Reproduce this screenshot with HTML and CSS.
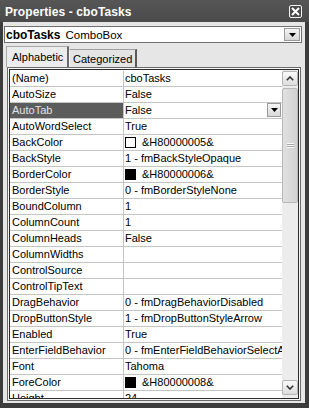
FILE: index.html
```html
<!DOCTYPE html>
<html>
<head>
<meta charset="utf-8">
<link rel="stylesheet" href="styles.css">
</head>
<body>
<div class="window">
  <div class="titlebar">
    <span class="title">Properties - cboTasks</span>
    <span class="close"><svg width="9" height="9" viewBox="0 0 9 9"><path d="M1 1 L8 8 M8 1 L1 8" stroke="#fff" stroke-width="2" fill="none"/></svg></span>
  </div>
  <div class="body">
    <div class="combo">
      <span class="combo-text"><b>cboTasks</b><span class="combo-type">ComboBox</span></span>
      <span class="dd-btn"><svg width="7" height="4" viewBox="0 0 7 4"><path d="M0 0 H7 L3.5 4 Z" fill="#000"/></svg></span>
    </div>
    <div class="tabs">
      <div class="tab active">Alphabetic</div>
      <div class="tab">Categorized</div>
    </div>
    <div class="grid">
      <div class="list">
        <div class="rows">
          <div class="row"><div class="name">(Name)</div><div class="val">cboTasks</div></div>
          <div class="row"><div class="name">AutoSize</div><div class="val">False</div></div>
          <div class="row sel"><div class="name">AutoTab</div><div class="val">False<span class="cell-btn"><svg width="7" height="4" viewBox="0 0 7 4"><path d="M0 0 H7 L3.5 4 Z" fill="#000"/></svg></span></div></div>
          <div class="row"><div class="name">AutoWordSelect</div><div class="val">True</div></div>
          <div class="row"><div class="name">BackColor</div><div class="val"><span class="swatch white"></span>&amp;H80000005&amp;</div></div>
          <div class="row"><div class="name">BackStyle</div><div class="val">1 - fmBackStyleOpaque</div></div>
          <div class="row"><div class="name">BorderColor</div><div class="val"><span class="swatch black"></span>&amp;H80000006&amp;</div></div>
          <div class="row"><div class="name">BorderStyle</div><div class="val">0 - fmBorderStyleNone</div></div>
          <div class="row"><div class="name">BoundColumn</div><div class="val">1</div></div>
          <div class="row"><div class="name">ColumnCount</div><div class="val">1</div></div>
          <div class="row"><div class="name">ColumnHeads</div><div class="val">False</div></div>
          <div class="row"><div class="name">ColumnWidths</div><div class="val"></div></div>
          <div class="row"><div class="name">ControlSource</div><div class="val"></div></div>
          <div class="row"><div class="name">ControlTipText</div><div class="val"></div></div>
          <div class="row"><div class="name">DragBehavior</div><div class="val">0 - fmDragBehaviorDisabled</div></div>
          <div class="row"><div class="name">DropButtonStyle</div><div class="val">1 - fmDropButtonStyleArrow</div></div>
          <div class="row"><div class="name">Enabled</div><div class="val">True</div></div>
          <div class="row"><div class="name">EnterFieldBehavior</div><div class="val">0 - fmEnterFieldBehaviorSelectAll</div></div>
          <div class="row"><div class="name">Font</div><div class="val">Tahoma</div></div>
          <div class="row"><div class="name">ForeColor</div><div class="val"><span class="swatch black"></span>&amp;H80000008&amp;</div></div>
          <div class="row"><div class="name">Height</div><div class="val">24</div></div>
        </div>
        <div class="scrollbar">
          <div class="sb-btn"><svg width="8" height="5" viewBox="0 0 8 5"><path d="M0.8 4.2 L4 1 L7.2 4.2" stroke="#333" stroke-width="1.6" fill="none"/></svg></div>
          <div class="sb-track">
            <div class="sb-thumb"><span class="grip"></span></div>
          </div>
          <div class="sb-btn"><svg width="8" height="5" viewBox="0 0 8 5"><path d="M0.8 0.8 L4 4 L7.2 0.8" stroke="#333" stroke-width="1.6" fill="none"/></svg></div>
        </div>
      </div>
    </div>
  </div>
</div>
</body>
</html>
```

FILE: styles.css
```css
html, body {
  margin: 0;
  padding: 0;
  background: #3e3e3e;
}
.window {
  width: 309px;
  height: 408px;
  box-sizing: border-box;
  padding: 0 4px 5px 3px;
  background: #3c3c3c;
  display: flex;
  flex-direction: column;
  font-family: "Liberation Sans", Arial, sans-serif;
  font-size: 11px;
  color: #000;
}
.titlebar {
  height: 22px;
  flex: none;
  display: flex;
  align-items: center;
  justify-content: space-between;
  background: linear-gradient(#565656, #4a4a4a);
  margin: 0 -4px 0 -3px;
  padding: 1px 4px 0 5px;
  box-sizing: border-box;
}
.title {
  color: #fff;
  font-weight: bold;
  font-size: 12px;
  letter-spacing: 0.1px;
}
.close {
  width: 11px;
  height: 11px;
  border: 1px solid #f2f2f2;
  border-radius: 2px;
  background: #4a4a4a;
  display: flex;
  align-items: center;
  justify-content: center;
  margin-right: 3px;
}
.body {
  flex: 1;
  background: #e6e6e6;
  padding-top: 4px;
  display: flex;
  flex-direction: column;
}
.combo {
  margin-left: 1px;
  width: 298px;
  height: 17px;
  box-sizing: border-box;
  border: 1px solid #707070;
  background: #fff;
  display: flex;
  align-items: center;
  justify-content: space-between;
  font-size: 12px;
}
.combo-text {
  padding-left: 1px;
  display: flex;
  align-items: baseline;
}
.combo-type {
  font-size: 11.5px;
  margin-left: 5px;
}
.dd-btn {
  width: 16px;
  height: 13px;
  margin-right: 1px;
  box-sizing: border-box;
  border: 1px solid #9a9a9a;
  background: linear-gradient(#f4f4f4, #d6d6d6);
  display: flex;
  align-items: center;
  justify-content: center;
}
.tabs {
  margin-top: 3px;
  height: 21px;
  padding-left: 3px;
  display: flex;
  align-items: flex-end;
  font-size: 11px;
}
.tab {
  height: 18px;
  box-sizing: border-box;
  padding: 3px 0 0 3px;
  width: 68px;
  border-top: 1px solid #a0a0a0;
  border-left: 1px solid #f6f6f6;
  border-right: 2px solid #5a5a5a;
  background: #e4e4e4;
  white-space: nowrap;
}
.tab.active {
  height: 21px;
  width: 63px;
  padding: 4px 0 0 5px;
  background: #ececec;
  border-top: 1px solid #a8a8a8;
  border-left: 1px solid #a8a8a8;
  border-right: 2px solid #6a6a6a;
}
.grid {
  margin-left: 4px;
  width: 294px;
  height: 334px;
  box-sizing: border-box;
  border: 1px solid #6a6a6a;
  padding: 1px;
  background: #f8f8f8;
}
.list {
  height: 100%;
  box-sizing: border-box;
  border: 1px solid #2a2a2a;
  background: #fff;
  display: flex;
  overflow: hidden;
}
.rows {
  flex: 1;
  padding-top: 1px;
  overflow: hidden;
}
.row {
  height: 16px;
  box-sizing: border-box;
  border-bottom: 1px solid #c4c4c4;
  display: flex;
  line-height: 15px;
  white-space: nowrap;
}
.name {
  width: 114px;
  flex: none;
  box-sizing: border-box;
  padding-left: 2px;
  border-right: 1px solid #c4c4c4;
  overflow: hidden;
}
.val {
  flex: 1;
  padding-left: 1px;
  overflow: hidden;
  display: flex;
  align-items: center;
  position: relative;
}
.row.sel .name {
  background: #5c5c5c;
  color: #e2e2e2;
}
.cell-btn {
  position: absolute;
  right: 1px;
  top: 0;
  width: 14px;
  height: 14px;
  box-sizing: border-box;
  border: 1px solid #9a9a9a;
  background: linear-gradient(#f6f6f6, #d8d8d8);
  display: flex;
  align-items: center;
  justify-content: center;
}
.swatch {
  width: 11px;
  height: 11px;
  box-sizing: border-box;
  border: 1px solid #000;
  margin-right: 6px;
  flex: none;
}
.swatch.white { background: #fff; }
.swatch.black { background: #000; }
.scrollbar {
  width: 16px;
  flex: none;
  background: #ececec;
  display: flex;
  flex-direction: column;
  padding: 1px 0 3px;
  box-sizing: border-box;
}
.sb-btn {
  height: 15px;
  box-sizing: border-box;
  border: 1px solid #b4b4b4;
  border-radius: 2px;
  background: linear-gradient(#fafafa, #dcdcdc);
  display: flex;
  align-items: center;
  justify-content: center;
}
.sb-track {
  flex: 1;
  padding-top: 2px;
}
.sb-thumb {
  height: 115px;
  box-sizing: border-box;
  border: 1px solid #b8b8b8;
  border-radius: 2px;
  background: linear-gradient(90deg, #e0e0e0, #d2d2d2);
  display: flex;
  align-items: center;
  justify-content: center;
}
.grip {
  width: 7px;
  height: 5px;
  background: repeating-linear-gradient(#f8f8f8 0 1px, #a8a8a8 1px 2px);
}
```
